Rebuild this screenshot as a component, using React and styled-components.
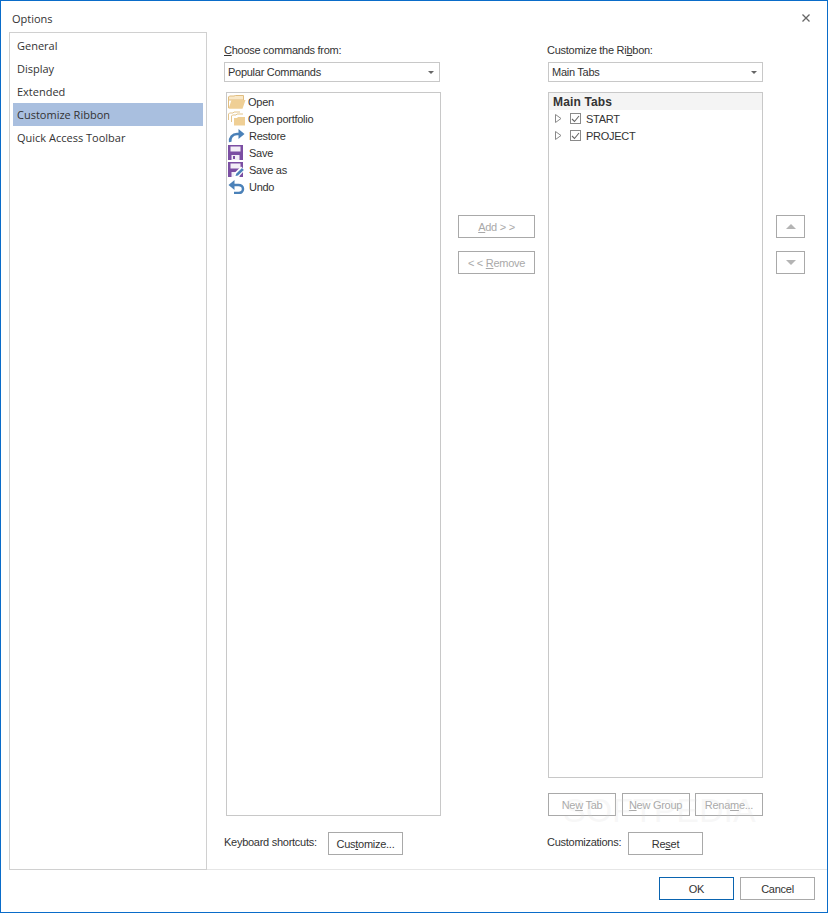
import styled, { createGlobalStyle } from "styled-components";

const GlobalStyle = createGlobalStyle`
  html, body {
    margin: 0;
    padding: 0;
    background: #fff;
  }
`;

const NAV_ITEMS = ["General", "Display", "Extended", "Customize Ribbon", "Quick Access Toolbar"];

function OpenIcon() {
  return (
    <svg width="18" height="14" viewBox="0 0 18 14">
      <path d="M0.5 13V2L1.5 1H6L7.5 0.5H15.5V5H0.5z" fill="#f9e8c8" stroke="#e0bd80" strokeWidth="1" />
      <path d="M0.5 13.8L3.5 5H17.5L14.5 13.8z" fill="#efcf95" />
    </svg>
  );
}

function PortfolioIcon() {
  return (
    <svg width="18" height="15" viewBox="0 0 18 15">
      <path d="M0.5 9V3L1.5 2H5L6 1H12" fill="none" stroke="#e3c48c" strokeWidth="1" />
      <path d="M3.5 11V5L4.5 4H8L9 3H15" fill="none" stroke="#e3c48c" strokeWidth="1" />
      <path d="M6 14.5V7H9L10 6H17V14.5z" fill="#efcf95" />
    </svg>
  );
}

function RestoreIcon() {
  return (
    <svg width="17" height="14" viewBox="0 0 17 14">
      <path d="M2.2 13C1.6 8.5 4.5 5 9 5H12" fill="none" stroke="#4b81b8" strokeWidth="2.6" />
      <path d="M10.5 0L16.5 5L10.5 10z" fill="#4b81b8" />
    </svg>
  );
}

function SaveIcon() {
  return (
    <svg width="15" height="15" viewBox="0 0 15 15">
      <rect x="0" y="0" width="15" height="15" fill="#7b4ea3" />
      <rect x="2.5" y="1.5" width="10" height="5" fill="#f3eef7" />
      <rect x="3.5" y="10" width="8" height="5" fill="#f3eef7" />
      <rect x="5" y="11" width="2" height="3" fill="#7b4ea3" />
    </svg>
  );
}

function SaveAsIcon() {
  return (
    <svg width="17" height="15" viewBox="0 0 17 15">
      <rect x="0" y="0" width="15" height="15" fill="#7b4ea3" />
      <rect x="2.5" y="1.5" width="10" height="5" fill="#f3eef7" />
      <rect x="3.5" y="10" width="8" height="5" fill="#f3eef7" />
      <path d="M5.5 15L6.5 11L13 4.5L17 8L10.5 15z" fill="#fff" />
      <path d="M7.5 14L8.2 11.8L14 6L15.8 7.9L10 13.4z" fill="#4b81b8" />
    </svg>
  );
}

function UndoIcon() {
  return (
    <svg width="17" height="14" viewBox="0 0 17 14">
      <path d="M4 5H10.5C13 5 15 6.5 15 9C15 11.5 13 13 10.5 13H6" fill="none" stroke="#4b81b8" strokeWidth="2.5" />
      <path d="M6.5 0L0.5 5L6.5 10z" fill="#4b81b8" />
    </svg>
  );
}

const COMMANDS = [
  { label: "Open", icon: <OpenIcon />, inset: 0 },
  { label: "Open portfolio", icon: <PortfolioIcon />, inset: 0 },
  { label: "Restore", icon: <RestoreIcon />, inset: 1 },
  { label: "Save", icon: <SaveIcon />, inset: 1 },
  { label: "Save as", icon: <SaveAsIcon />, inset: 1 },
  { label: "Undo", icon: <UndoIcon />, inset: 1 },
];

const TABS = ["START", "PROJECT"];

export default function App() {
  return (
    <>
      <GlobalStyle />
      <Window>
        <TitleBar>
          <Title>Options</Title>
          <CloseButton aria-label="Close">
            <svg width="8" height="8" viewBox="0 0 8 8">
              <path d="M0.5 0.5L7.5 7.5M7.5 0.5L0.5 7.5" stroke="#666" strokeWidth="1.3" fill="none" />
            </svg>
          </CloseButton>
        </TitleBar>

        <Body>
          <Nav>
            {NAV_ITEMS.map((item) => (
              <NavItem key={item} $active={item === "Customize Ribbon"}>
                {item}
              </NavItem>
            ))}
          </Nav>

          <Content>
            <FieldLabel>
              <u>C</u>hoose commands from:
            </FieldLabel>
            <Spacer />
            <FieldLabel>
              Customize the Ri<u>b</u>bon:
            </FieldLabel>
            <Spacer />

            <Select $w={216}>
              Popular Commands
              <Caret />
            </Select>
            <Spacer />
            <Select $w={215} $inset={1}>
              Main Tabs
              <Caret />
            </Select>
            <Spacer />

            <CommandList>
              {COMMANDS.map((c) => (
                <CommandRow key={c.label}>
                  <IconSlot>{c.icon}</IconSlot>
                  <CommandLabel $inset={c.inset}>{c.label}</CommandLabel>
                </CommandRow>
              ))}
            </CommandList>

            <MoveColumn $left={17}>
              <Button disabled $w={77}>
                <u>A</u>dd &gt; &gt;
              </Button>
              <Button disabled $w={77}>
                &lt; &lt; <u>R</u>emove
              </Button>
            </MoveColumn>

            <TreeColumn>
              <Tree>
                <TreeHeader>Main Tabs</TreeHeader>
                {TABS.map((t) => (
                  <TreeRow key={t}>
                    <Expander width="7" height="9" viewBox="0 0 7 9">
                      <path d="M0.5 0.5L6 4.5L0.5 8.5z" fill="#fff" stroke="#8a8a8a" strokeWidth="1" />
                    </Expander>
                    <CheckBox>
                      <svg width="9" height="8" viewBox="0 0 9 8">
                        <path d="M1 4L3.5 6.5L8 1" fill="none" stroke="#666" strokeWidth="1.1" />
                      </svg>
                    </CheckBox>
                    {t}
                  </TreeRow>
                ))}
              </Tree>
              <TreeButtons>
                <Button disabled $w={68}>
                  Ne<u>w</u> Tab
                </Button>
                <Button disabled $w={68}>
                  <u>N</u>ew Group
                </Button>
                <Button disabled $w={68}>
                  Rena<u>m</u>e...
                </Button>
              </TreeButtons>
            </TreeColumn>

            <MoveColumn $left={13}>
              <Button disabled $w={29}>
                <ArrowUp />
              </Button>
              <Button disabled $w={29}>
                <ArrowDown />
              </Button>
            </MoveColumn>

            <ActionRow>
              <ActionLabel $w={104}>Keyboard shortcuts:</ActionLabel>
              <Button $w={75}>
                Cus<u>t</u>omize...
              </Button>
            </ActionRow>
            <Spacer />
            <ActionRow>
              <ActionLabel $w={81}>Customizations:</ActionLabel>
              <Button $w={75}>
                Re<u>s</u>et
              </Button>
            </ActionRow>
            <Spacer />
          </Content>
        </Body>

        <Footer>
          <Button $w={75} $primary>
            OK
          </Button>
          <Button $w={75}>Cancel</Button>
        </Footer>

        <Watermark>SOFTPEDIA</Watermark>
      </Window>
    </>
  );
}

const Window = styled.div`
  position: relative;
  box-sizing: border-box;
  width: 828px;
  height: 913px;
  border: 1px solid #0a6cc9;
  display: flex;
  flex-direction: column;
  background: #fff;
  overflow: hidden;
  font-family: "Liberation Sans", Arial, sans-serif;
  font-size: 11px;
  letter-spacing: -0.27px;
  color: #222;
`;

const TitleBar = styled.div`
  height: 31px;
  flex: none;
  display: flex;
  align-items: center;
  justify-content: space-between;
  padding: 3px 17px 0 11px;
  box-sizing: border-box;
`;

const Title = styled.span`
  font-family: "Open Sans", sans-serif;
  font-size: 11px;
  letter-spacing: 0;
  color: #333;
`;

const CloseButton = styled.div`
  display: flex;
`;

const Body = styled.div`
  flex: none;
  height: 837px;
  display: flex;
  padding-left: 8px;
`;

const Nav = styled.div`
  box-sizing: border-box;
  width: 198px;
  height: 838px;
  border: 1px solid #d0d0d0;
  padding: 1px 3px;
`;

const NavItem = styled.div`
  height: 23px;
  line-height: 23px;
  padding-left: 4px;
  font-family: "Open Sans", sans-serif;
  font-size: 11px;
  letter-spacing: 0;
  color: #333;
  background: ${(p) => (p.$active ? "#a9bfdf" : "transparent")};
`;

const Content = styled.div`
  flex: 1;
  display: grid;
  grid-template-columns: 217px 106px 216px 42px;
  grid-template-rows: 20px 30px 724px auto;
  padding-left: 17px;
  margin-top: 10px;
  box-sizing: border-box;
`;

const Spacer = styled.div``;

const FieldLabel = styled.div`
  line-height: 14px;
  padding-top: 1px;
  color: #333;
  u {
    text-underline-offset: 1px;
  }
`;

const Select = styled.div`
  box-sizing: border-box;
  width: ${(p) => p.$w}px;
  height: 20px;
  margin-left: ${(p) => p.$inset || 0}px;
  border: 1px solid #c8c8c8;
  padding-left: 3px;
  line-height: 18px;
  display: flex;
  align-items: center;
  justify-content: space-between;
  color: #333;
`;

const Caret = styled.span`
  width: 0;
  height: 0;
  margin-right: 5px;
  border-left: 3px solid transparent;
  border-right: 3px solid transparent;
  border-top: 3px solid #666;
`;

const CommandList = styled.div`
  box-sizing: border-box;
  margin-left: 2px;
  width: 215px;
  height: 724px;
  border: 1px solid #c8c8c8;
`;

const CommandRow = styled.div`
  height: 17px;
  display: flex;
  align-items: center;
  padding-left: 1px;
  color: #333;
`;

const IconSlot = styled.span`
  width: 20px;
  display: flex;
  flex: none;
`;

const CommandLabel = styled.span`
  margin-left: ${(p) => p.$inset}px;
`;

const MoveColumn = styled.div`
  display: flex;
  flex-direction: column;
  gap: 13px;
  padding: 123px 0 0 ${(p) => p.$left}px;
`;

const Button = styled.div`
  box-sizing: border-box;
  flex: none;
  width: ${(p) => p.$w}px;
  height: 23px;
  border: 1px solid ${(p) => (p.$primary ? "#0a64b0" : "#a9a9a9")};
  display: flex;
  align-items: center;
  justify-content: center;
  white-space: pre;
  color: ${(p) => (p.disabled ? "#a9a9a9" : "#333")};
`;

const ArrowUp = styled.span`
  width: 0;
  height: 0;
  border-left: 5px solid transparent;
  border-right: 5px solid transparent;
  border-bottom: 5px solid #b4b4b4;
`;

const ArrowDown = styled.span`
  width: 0;
  height: 0;
  border-left: 5px solid transparent;
  border-right: 5px solid transparent;
  border-top: 5px solid #b4b4b4;
`;

const TreeColumn = styled.div`
  display: flex;
  flex-direction: column;
  width: 215px;
  margin-left: 1px;
`;

const Tree = styled.div`
  box-sizing: border-box;
  height: 686px;
  border: 1px solid #c8c8c8;
`;

const TreeHeader = styled.div`
  height: 17px;
  line-height: 18px;
  padding-left: 4px;
  background: #f4f4f4;
  font-size: 12px;
  font-weight: bold;
  letter-spacing: 0.15px;
  color: #333;
`;

const TreeRow = styled.div`
  height: 17px;
  display: flex;
  align-items: center;
  padding-left: 6px;
  color: #333;
`;

const Expander = styled.svg`
  flex: none;
  margin-right: 8px;
`;

const CheckBox = styled.span`
  box-sizing: border-box;
  flex: none;
  width: 11px;
  height: 11px;
  margin-right: 5px;
  border: 1px solid #8a8a8a;
  display: flex;
  align-items: center;
  justify-content: center;
`;

const TreeButtons = styled.div`
  display: flex;
  justify-content: space-between;
  margin-top: 15px;
`;

const ActionRow = styled.div`
  display: flex;
  align-items: flex-start;
  padding-top: 16px;
`;

const ActionLabel = styled.span`
  width: ${(p) => p.$w}px;
  flex: none;
  margin-top: 4px;
  white-space: nowrap;
  color: #333;
`;

const Footer = styled.div`
  flex: 1;
  margin-left: 206px;
  border-top: 1px solid #e6e6e6;
  display: flex;
  justify-content: flex-end;
  gap: 6px;
  padding: 7px 12px 0 0;
`;

const Watermark = styled.div`
  position: absolute;
  left: 562px;
  top: 790px;
  font-size: 34px;
  letter-spacing: 0;
  color: rgba(215, 215, 215, 0.2);
  pointer-events: none;
`;
